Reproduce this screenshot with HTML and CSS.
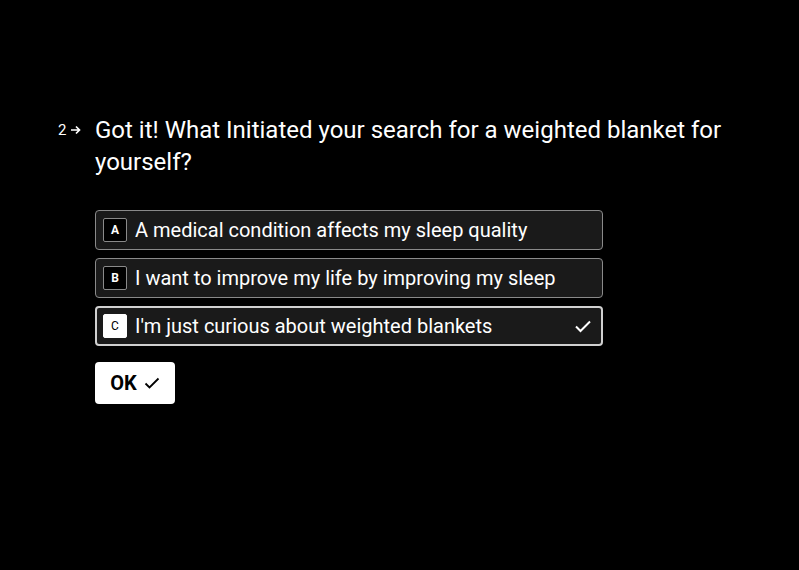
FILE: index.html
```html
<!DOCTYPE html>
<html lang="en">
<head>
    <meta charset="UTF-8">
    <meta name="viewport" content="width=device-width, initial-scale=1.0">
    <title>Weighted blanket quiz</title>
    <link rel="stylesheet" href="styles.css">
</head>
<body>
<div class="pergunta">
    <div class="numero">
        <span>2</span>
        <svg width="11" height="10" viewBox="0 0 11 10"><path d="M1 5h8.5M6 1.5L9.5 5 6 8.5" fill="none" stroke="#fff" stroke-width="1.7"/></svg>
    </div>
    <div class="conteudo">
        <h1 class="titulo">Got it! What Initiated your search for a weighted blanket for yourself?</h1>
        <div class="opcoes">
            <div class="opcao">
                <span class="tecla">A</span>
                <span class="texto">A medical condition affects my sleep quality</span>
            </div>
            <div class="opcao">
                <span class="tecla">B</span>
                <span class="texto">I want to improve my life by improving my sleep</span>
            </div>
            <div class="opcao selecionada">
                <span class="tecla">C</span>
                <span class="texto">I'm just curious about weighted blankets</span>
                <svg class="marca" width="18" height="14" viewBox="0 0 18 14"><path d="M2 7.5l4.5 4.5L16 2.5" fill="none" stroke="#fff" stroke-width="2"/></svg>
            </div>
        </div>
        <button class="btn">OK
            <svg width="16" height="12" viewBox="0 0 16 12"><path d="M1.5 6.5l4 4L14.5 1.5" fill="none" stroke="#000" stroke-width="1.8"/></svg>
        </button>
    </div>
</div>
</body>
</html>
```

FILE: styles.css
```css
body {
    background-color: #000;
    color: #fff;
    font-family: Roboto, "Liberation Sans", sans-serif;
    margin: 0;
    padding: 0;
}
.pergunta {
    display: flex;
    padding: 114px 0 0 58px;
}
.numero {
    width: 37px;
    display: flex;
    align-items: center;
    gap: 4px;
    height: 32px;
    font-size: 15px;
}
.numero span {
    line-height: 1;
}
.conteudo {
    width: 640px;
}
.titulo {
    font-size: 24px;
    font-weight: 400;
    line-height: 32px;
    margin: 0 0 32px 0;
}
.opcoes {
    width: 508px;
    display: flex;
    flex-direction: column;
    gap: 8px;
}
.opcao {
    box-sizing: border-box;
    height: 40px;
    display: flex;
    align-items: center;
    gap: 8px;
    padding: 0 7px;
    background-color: #1a1a1a;
    border: 1px solid #8a8a8a;
    border-radius: 4px;
    font-size: 20px;
}
.tecla {
    box-sizing: border-box;
    width: 24px;
    height: 24px;
    display: flex;
    align-items: center;
    justify-content: center;
    border: 1px solid #8a8a8a;
    border-radius: 2px;
    background-color: #000;
    font-size: 12px;
    font-weight: 700;
}
.selecionada {
    border: 2px solid #d0d0d0;
    padding: 0 6px;
}
.selecionada .tecla {
    background-color: #fff;
    color: #000;
    border-color: #fff;
    font-weight: 400;
}
.marca {
    margin-left: auto;
    margin-right: 3px;
}
.btn {
    margin-top: 16px;
    width: 80px;
    height: 42px;
    display: flex;
    align-items: center;
    justify-content: center;
    gap: 7px;
    background-color: #fff;
    color: #000;
    border: none;
    border-radius: 4px;
    font-family: Roboto, "Liberation Sans", sans-serif;
    font-size: 20px;
    font-weight: 700;
    cursor: pointer;
    padding: 0;
}
```
